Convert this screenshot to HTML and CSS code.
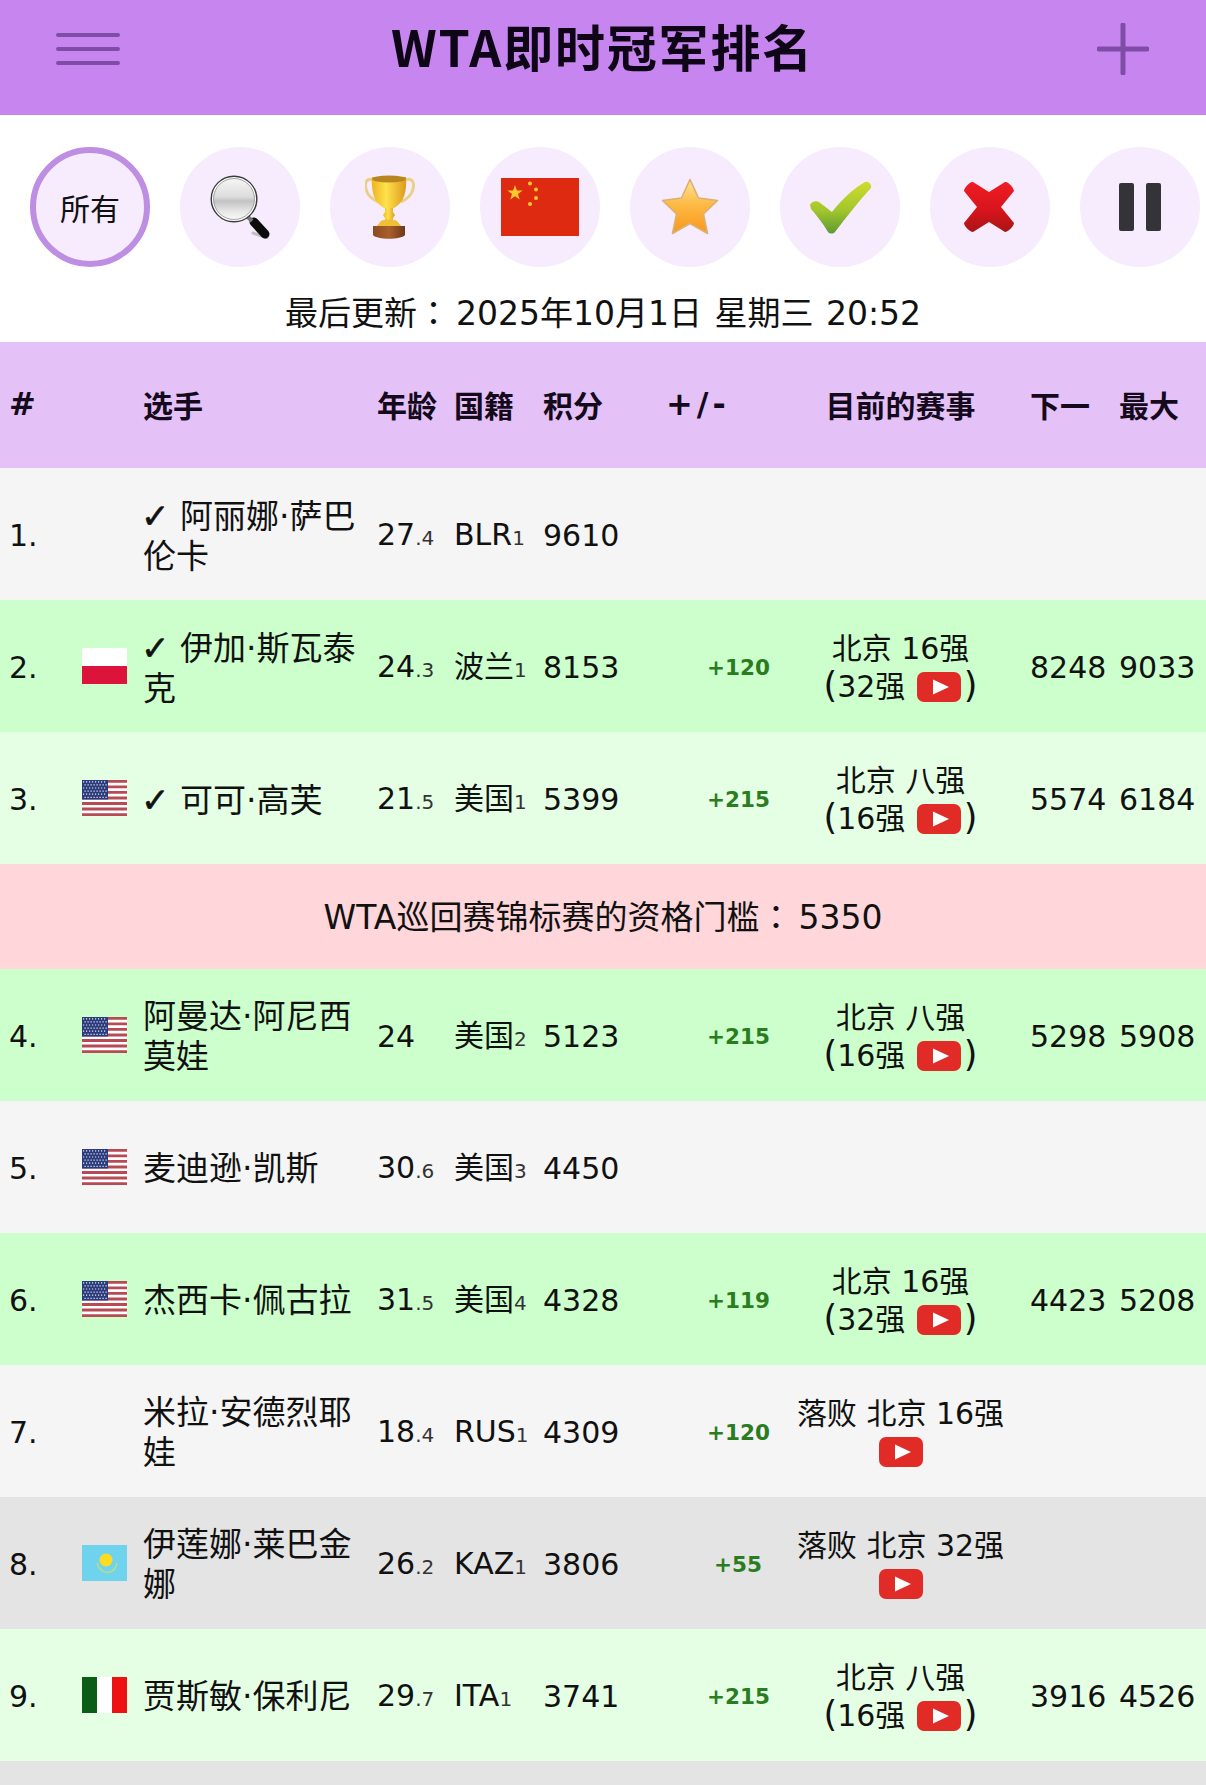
FILE: index.html
```html
<!DOCTYPE html>
<html lang="zh-CN">
<head>
<meta charset="utf-8">
<title>WTA即时冠军排名</title>
<link rel="stylesheet" href="styles.css">
</head>
<body>
<svg class="defs" width="0" height="0" aria-hidden="true">
  <defs>
    <symbol id="yt" viewBox="0 0 44 30"><rect width="44" height="30" rx="7" fill="#e12b26"/><path d="M16 7.500 32 15 16 22.500Z" fill="#fff"/></symbol>
    <symbol id="us" viewBox="0 0 45 36">
      <rect width="45" height="36" fill="#fff"/>
      <path d="M0 1.400h45M0 6.900h45M0 12.400h45M0 18h45M0 23.500h45M0 29h45M0 34.600h45" stroke="#b84a55" stroke-width="2.770"/>
      <rect width="26" height="19.500" fill="#2b3b7c"/>
      <path d="M1 1.800h24M2.500 4.900h23M1 8h24M2.500 11.100h23M1 14.200h24M2.500 17.300h23" stroke="#e8e9f4" stroke-width="1.200" stroke-dasharray="1.200 1.800"/>
    </symbol>
  </defs>
</svg>
<header class="topbar">
  <div class="slot">
    <svg class="menu-icon" width="64" height="32" viewBox="0 0 64 32"><path d="M2 2h60M2 16h60M2 30h60" stroke="#7f4ca8" stroke-width="4" stroke-linecap="round"/></svg>
  </div>
  <h1 class="title">WTA即时冠军排名</h1>
  <div class="slot slot-end">
    <svg width="52" height="52" viewBox="0 0 52 52"><path d="M2 26h48M26 2v48" stroke="#7f4ca8" stroke-width="5" stroke-linecap="round"/></svg>
  </div>
</header>

<nav class="filters">
  <div class="chip chip-active">所有</div>
  <div class="chip">
    <svg width="60" height="64" viewBox="0 0 60 64">
      <defs><linearGradient id="lens" x1="0" y1="0" x2="0" y2="1"><stop offset="0" stop-color="#f6f6f6"/><stop offset=".45" stop-color="#dcdcdc"/><stop offset=".55" stop-color="#c2c2c2"/><stop offset=".8" stop-color="#e6e6e6"/><stop offset="1" stop-color="#fafafa"/></linearGradient></defs>
      <path d="M43 58 57 63" stroke="#c4bccb" stroke-width="3" stroke-linecap="round"/>
      <path d="M44 47 55 59" stroke="#0c0c0c" stroke-width="9" stroke-linecap="round"/>
      <path d="M37 41 42 46" stroke="#777" stroke-width="4"/>
      <circle cx="24" cy="24" r="22.800" fill="#fff" stroke="#3b3b3b" stroke-width="1.400"/>
      <circle cx="24" cy="24" r="20.500" fill="url(#lens)" stroke="#8e8e8e" stroke-width=".8"/>
    </svg>
  </div>
  <div class="chip">
    <svg width="50" height="65" viewBox="0 0 50 65">
      <defs>
        <linearGradient id="gold" x1="0" y1="0" x2="1" y2="0"><stop offset="0" stop-color="#efb422"/><stop offset=".42" stop-color="#ffe24c"/><stop offset="1" stop-color="#dd9a1c"/></linearGradient>
        <linearGradient id="wood" x1="0" y1="0" x2="1" y2="0"><stop offset="0" stop-color="#8b4a20"/><stop offset=".5" stop-color="#a95f2c"/><stop offset="1" stop-color="#70381a"/></linearGradient>
      </defs>
      <path d="M9 5C0 2 -1 10 2 17c2 5 7 8 11 10M40 5c9-3 10 5 7 12-2 5-7 8-11 10" fill="none" stroke="#ead088" stroke-width="3"/>
      <path d="M7 2h34c1 14-2 26-12 31H19C9 28 6 16 7 2Z" fill="url(#gold)"/>
      <ellipse cx="24" cy="4" rx="17" ry="3.500" fill="#b98520"/>
      <path d="M20 33h8v4l2 3-2 3v4H20v-4l-2-3 2-3Z" fill="url(#gold)"/>
      <path d="M16 46c4-2 12-2 16 0l5 6H11Z" fill="#efbf38"/>
      <path d="M8 51h32v9c-4 5-28 5-32 0Z" fill="url(#wood)"/>
    </svg>
  </div>
  <div class="chip">
    <svg width="78" height="58" viewBox="0 0 78 58">
      <rect width="78" height="58" fill="#df2a12"/>
      <path d="M14 7 15.900 12.500H21.600L17 16 18.700 21.500 14 18.200 9.300 21.500 11 16 6.400 12.500H12.100Z" fill="#f9c92b"/>
      <circle cx="29" cy="5.500" r="2" fill="#f9c92b"/><circle cx="35" cy="11.500" r="2" fill="#f9c92b"/><circle cx="35" cy="20" r="2" fill="#f9c92b"/><circle cx="29" cy="26" r="2" fill="#f9c92b"/>
    </svg>
  </div>
  <div class="chip">
    <svg width="58" height="58" viewBox="0 0 58 58">
      <defs><linearGradient id="star" x1="0" y1="0" x2="0" y2="1"><stop offset="0" stop-color="#fde49a"/><stop offset=".45" stop-color="#fdbb46"/><stop offset="1" stop-color="#f9961c"/></linearGradient></defs>
      <path d="M29 1.500 37.500 20 56.500 22.500 42.500 36 46.500 55.500 29 45.500 11.500 55.500 15.500 36 1.500 22.500 20.500 20Z" fill="url(#star)" stroke="#dcb070" stroke-width="1.600" stroke-linejoin="round"/>
    </svg>
  </div>
  <div class="chip">
    <svg width="63" height="53" viewBox="0 0 63 53">
      <defs><linearGradient id="chk" x1="0" y1="0" x2="0" y2="1"><stop offset="0" stop-color="#cfdc2e"/><stop offset=".55" stop-color="#a2c62c"/><stop offset="1" stop-color="#5f9a32"/></linearGradient></defs>
      <path d="M1 24c1-3 6-5 9-3l13 10C33 18 45 7 56 1c4-1 7 3 6 6C50 20 38 35 26 51c-2 2-5 2-7 0C14 42 7 34 2 28Z" fill="url(#chk)"/>
    </svg>
  </div>
  <div class="chip">
    <svg class="cross-icon" width="52" height="52" viewBox="0 0 52 52">
      <defs><linearGradient id="cross" x1="0" y1="0" x2="0" y2="1"><stop offset="0" stop-color="#f01c24"/><stop offset=".55" stop-color="#d8151c"/><stop offset="1" stop-color="#a81516"/></linearGradient></defs>
      <path d="M10 1 26 11 42 1c3-1 9 6 9 9L38 26l13 16c0 3-6 9-9 9L26 41 10 51c-3 0-9-6-9-9l13-16L1 10c0-3 6-10 9-9Z" fill="url(#cross)"/>
    </svg>
  </div>
  <div class="chip">
    <span class="pause"><i class="pause-bar"></i><i class="pause-bar"></i></span>
  </div>
</nav>

<p class="updated">最后更新<span class="colon" lang="zh-Hant">：</span>2025年10月1日 星期三 20:52</p>

<table class="rank">
  <colgroup>
    <col class="c-rank"><col class="c-flag"><col class="c-name"><col class="c-age"><col class="c-nat"><col class="c-pts"><col class="c-delta"><col class="c-event"><col class="c-next"><col class="c-max">
  </colgroup>
  <thead>
    <tr><th class="hash">#</th><th></th><th>选手</th><th>年龄</th><th>国籍</th><th>积分</th><th class="delta-head">+/-</th><th class="event">目前的赛事</th><th>下一</th><th>最大</th></tr>
  </thead>
  <tbody>
    <tr class="r-plain"><td>1.</td><td class="fl"></td><td class="nm"><span class="tick">✓</span> 阿丽娜·萨巴<br>伦卡</td><td>27<small>.4</small></td><td>BLR<small>1</small></td><td>9610</td><td class="delta"></td><td class="event"></td><td></td><td></td></tr>
    <tr class="r-green"><td>2.</td><td class="fl"><svg class="flag" viewBox="0 0 45 36"><rect width="45" height="18" fill="#fff"/><rect y="18" width="45" height="18" fill="#dc143c"/></svg></td><td class="nm"><span class="tick">✓</span> 伊加·斯瓦泰<br>克</td><td>24<small>.3</small></td><td>波兰<small>1</small></td><td>8153</td><td class="delta">+120</td><td class="event">北京 16强<br><span class="po">(</span>32强 <svg class="yt"><use href="#yt"/></svg><span class="pc">)</span></td><td>8248</td><td>9033</td></tr>
    <tr class="r-mint"><td>3.</td><td class="fl"><svg class="flag"><use href="#us"/></svg></td><td class="nm"><span class="tick">✓</span> 可可·高芙</td><td>21<small>.5</small></td><td>美国<small>1</small></td><td>5399</td><td class="delta">+215</td><td class="event">北京 八强<br><span class="po">(</span>16强 <svg class="yt"><use href="#yt"/></svg><span class="pc">)</span></td><td>5574</td><td>6184</td></tr>
    <tr class="r-cut"><td colspan="10">WTA巡回赛锦标赛的资格门槛<span class="colon" lang="zh-Hant">：</span>5350</td></tr>
    <tr class="r-green"><td>4.</td><td class="fl"><svg class="flag"><use href="#us"/></svg></td><td class="nm">阿曼达·阿尼西莫娃</td><td>24</td><td>美国<small>2</small></td><td>5123</td><td class="delta">+215</td><td class="event">北京 八强<br><span class="po">(</span>16强 <svg class="yt"><use href="#yt"/></svg><span class="pc">)</span></td><td>5298</td><td>5908</td></tr>
    <tr class="r-plain"><td>5.</td><td class="fl"><svg class="flag"><use href="#us"/></svg></td><td class="nm">麦迪逊·凯斯</td><td>30<small>.6</small></td><td>美国<small>3</small></td><td>4450</td><td class="delta"></td><td class="event"></td><td></td><td></td></tr>
    <tr class="r-green"><td>6.</td><td class="fl"><svg class="flag"><use href="#us"/></svg></td><td class="nm">杰西卡·佩古拉</td><td>31<small>.5</small></td><td>美国<small>4</small></td><td>4328</td><td class="delta">+119</td><td class="event">北京 16强<br><span class="po">(</span>32强 <svg class="yt"><use href="#yt"/></svg><span class="pc">)</span></td><td>4423</td><td>5208</td></tr>
    <tr class="r-plain"><td>7.</td><td class="fl"></td><td class="nm">米拉·安德烈耶娃</td><td>18<small>.4</small></td><td>RUS<small>1</small></td><td>4309</td><td class="delta">+120</td><td class="event">落败 北京 16强<br><svg class="yt"><use href="#yt"/></svg></td><td></td><td></td></tr>
    <tr class="r-gray"><td>8.</td><td class="fl"><svg class="flag" viewBox="0 0 45 36"><rect width="45" height="36" fill="#6fd3ee"/><circle cx="24" cy="15" r="6.500" fill="#fddc20"/><path d="M15 18c2 7 8 11 13 9 4-1 6-5 7-9" fill="none" stroke="#b8dc8c" stroke-width="1.600"/></svg></td><td class="nm">伊莲娜·莱巴金娜</td><td>26<small>.2</small></td><td>KAZ<small>1</small></td><td>3806</td><td class="delta">+55</td><td class="event">落败 北京 32强<br><svg class="yt"><use href="#yt"/></svg></td><td></td><td></td></tr>
    <tr class="r-mint"><td>9.</td><td class="fl"><svg class="flag" viewBox="0 0 45 36"><rect width="15" height="36" fill="#0b5c14"/><rect x="15" width="15" height="36" fill="#fff"/><rect x="30" width="15" height="36" fill="#ee1111"/></svg></td><td class="nm">贾斯敏·保利尼</td><td>29<small>.7</small></td><td>ITA<small>1</small></td><td>3741</td><td class="delta">+215</td><td class="event">北京 八强<br><span class="po">(</span>16强 <svg class="yt"><use href="#yt"/></svg><span class="pc">)</span></td><td>3916</td><td>4526</td></tr>
    <tr class="r-gray r-tail"><td colspan="10"></td></tr>
  </tbody>
</table>
</body>
</html>
```

FILE: styles.css
```css
* { box-sizing: border-box; }
html, body { margin: 0; padding: 0; background: #fff; }
body {
  font-family: "DejaVu Sans", "Noto Sans CJK SC", sans-serif;
  color: #111;
  height: 1785px;
  overflow: hidden;
}
.defs { position: absolute; }

.topbar {
  height: 115px;
  padding: 0 57px 17px 56px;
  display: flex;
  align-items: center;
  background: #c785ef;
  border-bottom: 1px solid #bb86dc;
}
.slot { width: 64px; flex: none; display: flex; }
.slot-end { justify-content: flex-end; }
.title {
  flex: 1;
  margin: 0 0 7px;
  text-align: center;
  font-family: "Noto Sans CJK SC", sans-serif;
  font-size: 50px;
  font-weight: 700;
  letter-spacing: 1.800px;
  line-height: 64px;
  color: #0e0616;
}

.filters {
  display: flex;
  gap: 30px;
  padding: 32px 0 0 30px;
}
.chip {
  width: 120px;
  height: 120px;
  flex: none;
  border-radius: 50%;
  background: #f6ecfd;
  display: flex;
  align-items: center;
  justify-content: center;
  font-size: 30px;
  font-family: "Noto Sans CJK SC", sans-serif;
}
.chip-active { border: 6px solid #bd8ee2; }
.cross-icon { margin-right: 3px; }
.pause { display: flex; gap: 12px; }
.pause-bar { display: block; width: 15px; height: 48px; border-radius: 2px; background: #333338; }

.updated {
  height: 40px;
  margin: 27px 0 8px;
  text-align: center;
  font-size: 33px;
  line-height: 40px;
  word-spacing: 2px;
}
.colon { font-family: "Noto Sans CJK TC", sans-serif; line-height: 1; margin-right: 6px; }

.rank {
  width: 1206px;
  table-layout: fixed;
  border-collapse: collapse;
  font-size: 30px;
  line-height: 40px;
}
.c-rank { width: 72px; }
.c-flag { width: 61px; }
.c-name { width: 234px; }
.c-age { width: 77px; }
.c-nat { width: 89px; }
.c-pts { width: 86px; }
.c-delta { width: 160px; }
.c-event { width: 241px; }
.c-next { width: 89px; }
.c-max { width: 97px; }

.rank th, .rank td { padding: 4px 0 0 10px; text-align: left; vertical-align: middle; overflow: visible; }
.rank td:first-child { padding-left: 9px; }
.rank thead tr { height: 126px; background: #e4c1f6; }
.rank th { padding: 0 0 2px 10px; font-size: 30px; font-weight: 700; font-family: "Noto Sans CJK SC", "DejaVu Sans", sans-serif; color: #140a1c; }
.rank .hash { padding-left: 9px; font-size: 32px; font-family: "DejaVu Sans", sans-serif; }
.rank .delta-head { padding-left: 47px; font-size: 32px; font-family: "DejaVu Sans", sans-serif; letter-spacing: 4px; }
.rank .event { padding: 3px 0 0 2px; text-align: center; white-space: nowrap; line-height: 38px; }
.rank th.event { padding: 0 0 2px 2px; }
.rank .fl { padding-top: 0; }
.rank .nm { font-size: 33px; }
.tick { font-size: 34px; margin-left: -2px; -webkit-text-stroke: .6px currentColor; }
.rank .delta {
  padding: 4px 10px 0 88px;
  text-align: center;
  font-size: 21.500px;
  font-weight: 700;
  color: #2a7d1e;
}
.rank tbody tr { height: 132px; }
.rank small { font-size: 20px; color: #333; }
.rank .r-plain { background: #f5f5f5; }
.rank .r-green { background: #ccffcc; }
.rank .r-mint { background: #e5ffe5; }
.rank .r-gray { background: #e4e4e4; }
.rank .r-cut { height: 105px; background: #ffd6da; }
.rank .r-cut td { padding: 2px 0 0; text-align: center; font-size: 33px; }
.rank .r-tail { height: 24px; }
.flag { display: block; width: 45px; height: 36px; }
.yt { width: 44px; height: 30px; margin: 0 2px; vertical-align: -5px; }
.po { font-size: 35px; line-height: 30px; }
.pc { font-size: 35px; line-height: 30px; margin-left: 1px; }
```
